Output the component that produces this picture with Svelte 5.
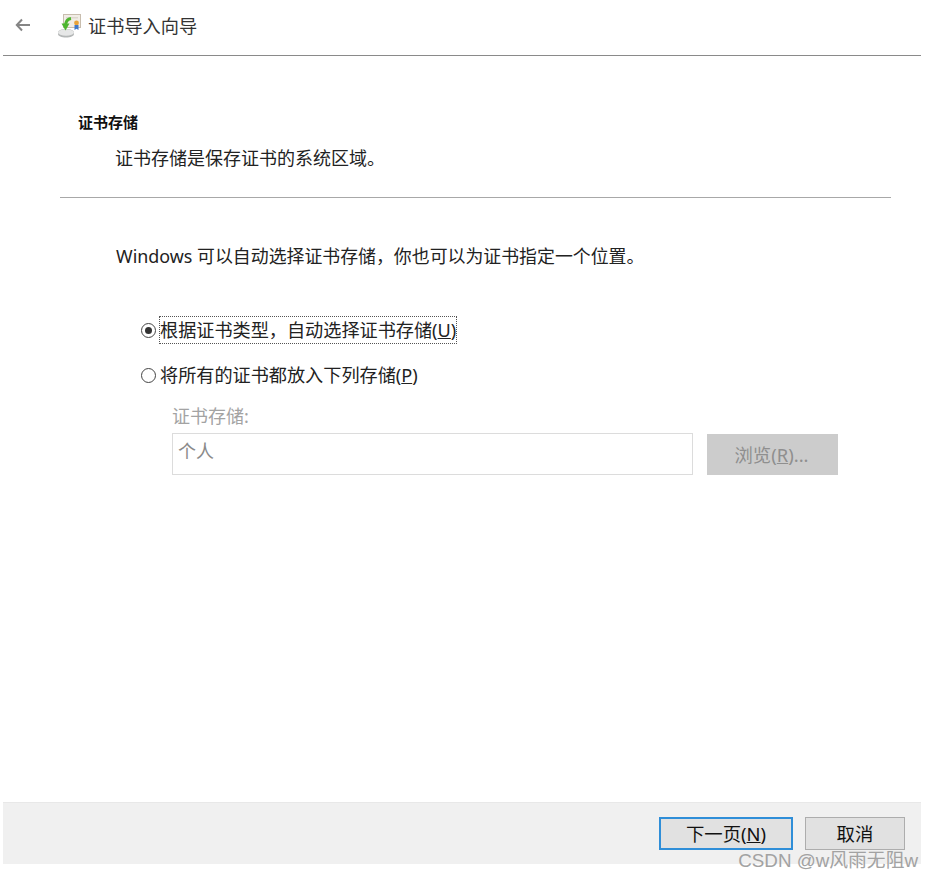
<script>
  const options = [
    { label: '根据证书类型，自动选择证书存储', key: 'U', checked: true },
    { label: '将所有的证书都放入下列存储', key: 'P', checked: false }
  ];
</script>

<div class="wizard">
  <header class="top">
    <svg class="back" width="16" height="14" viewBox="0 0 16 14" aria-hidden="true">
      <path d="M7 1.5 1.8 7 7 12.5M2 7h13" fill="none" stroke="#858585" stroke-width="2" />
    </svg>
    <svg class="cert" width="25" height="25" viewBox="0 0 25 25" aria-hidden="true">
      <rect x="6.500" y="1.500" width="17" height="13" fill="#f1ede6" stroke="#c8bdae" />
      <rect x="9" y="4" width="12" height="1.500" fill="#ddd7cd" />
      <circle cx="19.500" cy="10" r="2.400" fill="#e8a33a" />
      <path d="M17.500 12h4v5l-2-1.200-2 1.200z" fill="#3f78c9" />
      <path d="M1 19.500c0-2 3.500-3.500 8-3.500s8 1.500 8 3.500v1.500c0 2-3.500 3.500-8 3.500s-8-1.500-8-3.500z" fill="#b4b7b7" />
      <ellipse cx="9" cy="19.500" rx="8" ry="3.300" fill="#e6e7e7" />
      <path d="M14 5.500c-3 .5-5 2.500-5.500 6" fill="none" stroke="#4db52e" stroke-width="3" />
      <path d="M4.500 10.500h8l-4 7z" fill="#4db52e" />
    </svg>
    <span class="title">证书导入向导</span>
  </header>

  <main class="body">
    <section class="intro">
      <h1>证书存储</h1>
      <p>证书存储是保存证书的系统区域。</p>
    </section>

    <section class="content">
      <p class="lead">Windows 可以自动选择证书存储，你也可以为证书指定一个位置。</p>

      <div class="options">
        {#each options as opt}
          <div class="option">
            <span class="radio" class:on={opt.checked}></span>
            <span class="label" class:focus={opt.checked}>{opt.label}(<u>{opt.key}</u>)</span>
          </div>
        {/each}
      </div>

      <div class="store">
        <div class="store-label">证书存储:</div>
        <div class="store-row">
          <div class="field">个人</div>
          <div class="browse">浏览(<u>R</u>)...</div>
        </div>
      </div>
    </section>
  </main>

  <footer class="bottom">
    <button class="btn primary">下一页(<u>N</u>)</button>
    <button class="btn">取消</button>
  </footer>

  <span class="watermark">CSDN @w风雨无阻w</span>
</div>

<style>
  :global(body) {
    background: #fff;
    color: #1a1a1a;
    font-family: "Noto Sans", "Noto Sans CJK SC", sans-serif;
  }
  .wizard {
    position: relative;
    width: 931px;
    height: 879px;
    padding-left: 3px;
    box-sizing: border-box;
    display: flex;
    flex-direction: column;
  }
  .top {
    width: 918px;
    height: 55px;
    border-bottom: 1px solid #8a8a8a;
    display: flex;
    align-items: center;
  }
  .back {
    margin-left: 12px;
    margin-top: -5px;
  }
  .cert {
    margin-left: 26px;
    margin-top: -4px;
  }
  .title {
    margin-left: 6px;
    margin-top: -4px;
    font-size: 18.2px;
    line-height: 24px;
    color: #333;
  }
  .body {
    flex: 1;
    width: 918px;
  }
  .intro {
    margin-left: 57px;
    width: 831px;
    height: 142px;
    box-sizing: border-box;
    padding-top: 55px;
    border-bottom: 1px solid #a8a8a8;
  }
  h1 {
    margin: 0 0 0 18px;
    font-size: 15px;
    line-height: 22px;
    font-weight: 700;
    color: #111;
  }
  .intro p {
    margin: 12px 0 0 55px;
    font-size: 18px;
    line-height: 26px;
    color: #222;
  }
  .content {
    padding-left: 113px;
  }
  .lead {
    margin: 45px 0 0;
    font-size: 17.9px;
    line-height: 26px;
    color: #222;
  }
  .options {
    margin: 48px 0 0 25px;
    display: flex;
    flex-direction: column;
    gap: 19px;
  }
  .option {
    display: flex;
    align-items: center;
    height: 26px;
  }
  .radio {
    width: 15px;
    height: 15px;
    border: 1px solid #444;
    border-radius: 50%;
    background: #fff;
    box-sizing: border-box;
    position: relative;
    margin-right: 4px;
  }
  .radio.on::after {
    content: "";
    position: absolute;
    inset: 3px;
    border-radius: 50%;
    background: #333;
  }
  .label {
    font-size: 18.15px;
    line-height: 26px;
    color: #222;
    white-space: nowrap;
    outline: 1px solid transparent;
  }
  .label.focus {
    outline: 1px dotted #555;
  }
  .store {
    margin: 16px 0 0 56px;
  }
  .store-label {
    font-size: 18px;
    line-height: 24px;
    color: #a3a3a3;
  }
  .store-row {
    margin-top: 5px;
    display: flex;
    align-items: center;
    gap: 14px;
  }
  .field {
    width: 521px;
    height: 42px;
    box-sizing: border-box;
    border: 1px solid #dcdcdc;
    padding: 4px 5px;
    font-size: 18px;
    line-height: 26px;
    color: #8a8a8a;
  }
  .browse {
    width: 131px;
    height: 41px;
    background: #cccccc;
    display: flex;
    align-items: center;
    justify-content: center;
    padding-right: 2px;
    box-sizing: border-box;
    font-size: 18.4px;
    color: #8f8f8f;
  }
  .bottom {
    width: 918px;
    height: 62px;
    margin-bottom: 15px;
    box-sizing: border-box;
    background: #f0f0f0;
    border-top: 1px solid #e8e8e8;
    display: flex;
    justify-content: flex-end;
    align-items: flex-start;
    gap: 12px;
    padding: 14px 16px 0 0;
  }
  .btn {
    width: 100px;
    height: 33px;
    padding: 0;
    box-sizing: border-box;
    background: #e1e1e1;
    border: 1px solid #adadad;
    font: inherit;
    font-size: 18.4px;
    line-height: 24px;
    color: #111;
  }
  .btn.primary {
    width: 134px;
    border: 2px solid #2f8ed8;
  }
  .watermark {
    position: absolute;
    right: 13px;
    top: 850px;
    font-family: "Liberation Sans", "Noto Sans CJK SC", sans-serif;
    font-size: 18.8px;
    line-height: 22px;
    color: #a2a2a2;
    white-space: nowrap;
  }
</style>
